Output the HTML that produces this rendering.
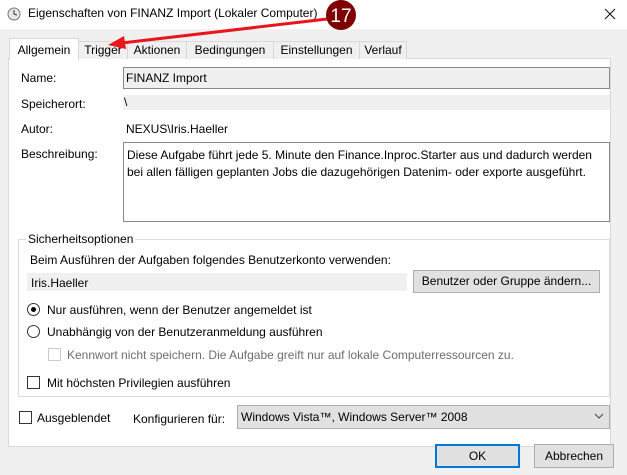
<!DOCTYPE html>
<html><head><meta charset="utf-8"><style>
*{box-sizing:border-box;margin:0;padding:0}
body{width:627px;height:475px;background:#f0f0f0;font-family:"Liberation Sans",sans-serif;font-size:12px;color:#000;position:relative;overflow:hidden}
.a{position:absolute;white-space:nowrap}
.title{left:0;top:0;width:627px;height:29px;background:#fff}
.tab{position:absolute;top:41px;height:18px;border:1px solid #d9d9d9;border-bottom:none;background:#f0f0f0;text-align:center;line-height:16px;font-size:12px}
.panel{left:8px;top:58px;width:603px;height:389px;background:#fff;border:1px solid #d9d9d9}
.box{position:absolute;background:#f0f0f0}
.btn{position:absolute;background:#e1e1e1;border:1px solid #adadad;text-align:center;font-size:12px}
.cb{position:absolute;width:13px;height:13px;border:1px solid #333;background:#fff}
.rd{position:absolute;width:13px;height:13px;border:1px solid #333;border-radius:50%;background:#fff}
</style></head><body>
<div class="a title"></div>
<svg class="a" style="left:7px;top:7px" width="14" height="14"><circle cx="7" cy="7" r="6" fill="#e8e8e8" stroke="#777"/><path d="M7 3V7L10 8" stroke="#333" fill="none"/></svg>
<div class="a" style="left:28px;top:6px;font-size:12px">Eigenschaften von FINANZ Import (Lokaler Computer)</div>
<svg class="a" style="left:604px;top:8px" width="12" height="12"><path d="M1 1L11 11M11 1L1 11" stroke="#111" stroke-width="1"/></svg>

<div class="a panel"></div>
<div class="tab" style="left:78px;width:50px">Trigger</div>
<div class="tab" style="left:127px;width:60px">Aktionen</div>
<div class="tab" style="left:186px;width:88px">Bedingungen</div>
<div class="tab" style="left:273px;width:87px">Einstellungen</div>
<div class="tab" style="left:359px;width:48px">Verlauf</div>
<div class="tab" style="left:9px;top:38px;width:70px;height:22px;background:#fff;line-height:22px">Allgemein</div>

<div class="a" style="left:21px;top:71px">Name:</div>
<div class="box" style="left:123px;top:67px;width:487px;height:22px;border:1px solid #8a8a8a"></div>
<div class="a" style="left:126px;top:71px">FINANZ Import</div>
<div class="a" style="left:21px;top:97px">Speicherort:</div>
<div class="box" style="left:123px;top:95px;width:487px;height:15px"></div>
<div class="a" style="left:124px;top:95px">\</div>
<div class="a" style="left:21px;top:122px">Autor:</div>
<div class="a" style="left:126px;top:122px">NEXUS\Iris.Haeller</div>
<div class="a" style="left:21px;top:147px">Beschreibung:</div>
<div class="a" style="left:123px;top:142px;width:487px;height:80px;border:1px solid #8a8a8a;background:#fff"></div>
<div class="a" style="left:127px;top:147px;line-height:17px">Diese Aufgabe führt jede 5. Minute den Finance.Inproc.Starter aus und dadurch werden<br>bei allen fälligen geplanten Jobs die dazugehörigen Datenim- oder exporte ausgeführt.</div>

<div class="a" style="left:18px;top:239px;width:592px;height:158px;border:1px solid #dcdcdc"></div>
<div class="a" style="left:26px;top:232px;background:#fff;padding:0 2px">Sicherheitsoptionen</div>
<div class="a" style="left:30px;top:253px">Beim Ausführen der Aufgaben folgendes Benutzerkonto verwenden:</div>
<div class="box" style="left:27px;top:273px;width:380px;height:18px"></div>
<div class="a" style="left:31px;top:276px">Iris.Haeller</div>
<div class="btn" style="left:413px;top:270px;width:187px;height:23px;line-height:21px">Benutzer oder Gruppe ändern...</div>
<div class="rd" style="left:27px;top:303px"></div><div class="a" style="left:31px;top:307px;width:5px;height:5px;border-radius:50%;background:#000"></div>
<div class="a" style="left:47px;top:303px">Nur ausführen, wenn der Benutzer angemeldet ist</div>
<div class="rd" style="left:27px;top:325px"></div>
<div class="a" style="left:47px;top:325px">Unabhängig von der Benutzeranmeldung ausführen</div>
<div class="cb" style="left:48px;top:348px;border-color:#ccc"></div>
<div class="a" style="left:67px;top:348px;color:#6d6d6d">Kennwort nicht speichern. Die Aufgabe greift nur auf lokale Computerressourcen zu.</div>
<div class="cb" style="left:27px;top:376px"></div>
<div class="a" style="left:47px;top:376px">Mit höchsten Privilegien ausführen</div>

<div class="cb" style="left:19px;top:411px"></div>
<div class="a" style="left:37px;top:411px">Ausgeblendet</div>
<div class="a" style="left:133px;top:412px">Konfigurieren für:</div>
<div class="a" style="left:237px;top:405px;width:373px;height:24px;background:#e1e1e1;border:1px solid #adadad"></div>
<div class="a" style="left:241px;top:410px">Windows Vista™, Windows Server™ 2008</div>
<svg class="a" style="left:594px;top:413px" width="10" height="6"><path d="M1 1L5 5L9 1" stroke="#444" fill="none"/></svg>

<div class="btn" style="left:435px;top:444px;width:85px;height:24px;line-height:20px;border:2px solid #0078d7">OK</div>
<div class="btn" style="left:534px;top:444px;width:80px;height:24px;line-height:22px">Abbrechen</div>

<svg class="a" style="left:0;top:0" width="627" height="60">
<line x1="327" y1="19" x2="122" y2="43" stroke="#e8161b" stroke-width="3"/>
<path d="M108 45L124 36L126 49Z" fill="#e8161b"/>
<circle cx="341" cy="15" r="15" fill="#7f0000"/>
<text x="341" y="22" fill="#fff" font-family="Liberation Sans" font-size="19" text-anchor="middle">17</text>
</svg>
</body></html>
